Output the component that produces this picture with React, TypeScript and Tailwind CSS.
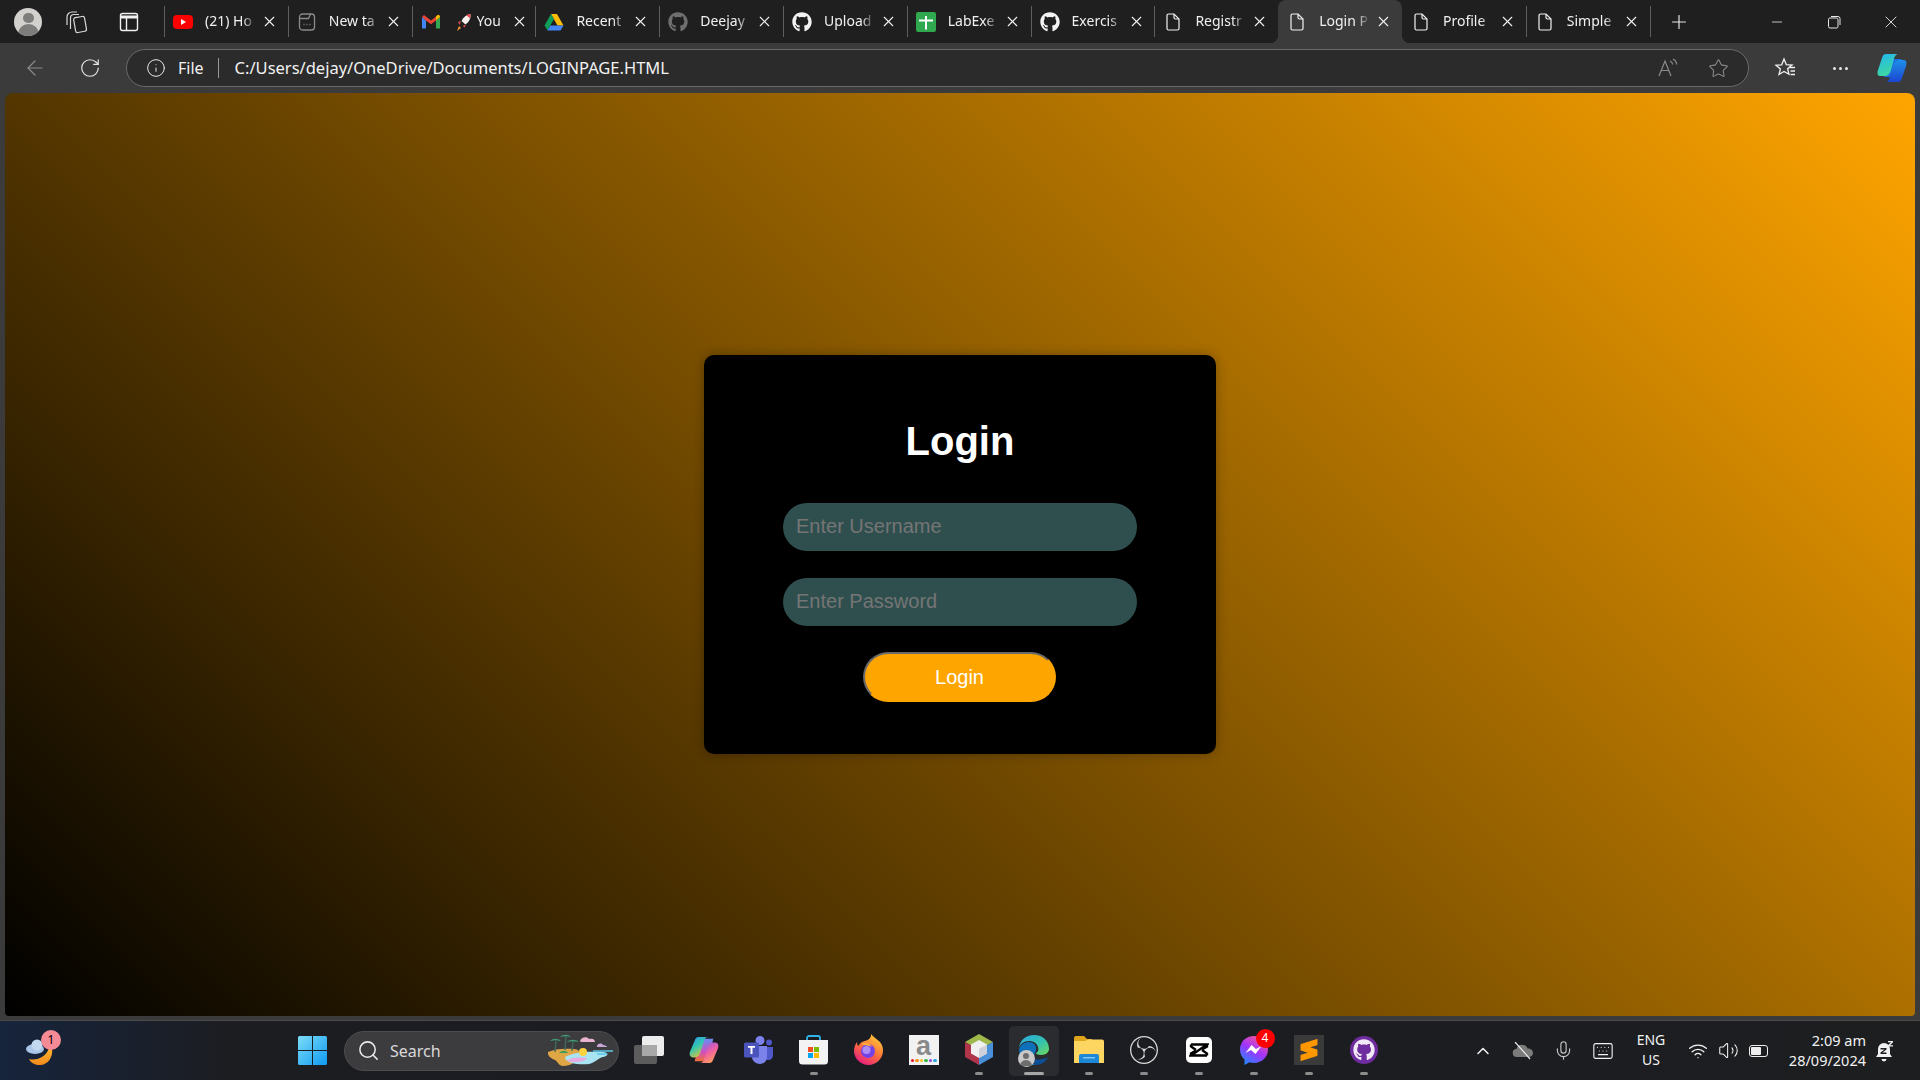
import type { ReactNode } from 'react'
import { ChevronUp, Keyboard, Mic, Minus, Plus, RotateCw, Search, Star, Volume2, Wifi, X, ArrowLeft, Info } from 'lucide-react'
import { FaGithub } from 'react-icons/fa'
import { SiObsstudio, SiSublimetext } from 'react-icons/si'

const ui = { fontFamily: '"Noto Sans", "Liberation Sans", sans-serif' }

function DocIcon() {
  return (
    <svg width="20" height="20" viewBox="0 0 20 20" fill="none" stroke="#f2f2f2" strokeWidth="1.2">
      <path d="M4 3.500a1.500 1.500 0 0 1 1.500-1.500H11l5 5v9.500a1.500 1.500 0 0 1-1.500 1.500h-9A1.500 1.500 0 0 1 4 16.500z" />
      <path d="M11 2v3.500A1.500 1.500 0 0 0 12.500 7H16" />
    </svg>
  )
}

function YoutubeIcon() {
  return (
    <svg width="20" height="20" viewBox="0 0 20 20">
      <rect y="3" width="20" height="14" rx="4" fill="#f00" />
      <path d="M8 7l5 3-5 3z" fill="#fff" />
    </svg>
  )
}

function NewTabIcon() {
  return (
    <svg width="20" height="20" viewBox="0 0 20 20" fill="none" stroke="#8a8a8a" strokeWidth="1.3">
      <rect x="2.500" y="2" width="15" height="16" rx="3" />
      <path d="M2.500 6.500h9l2-4.500" />
      <path d="M6.500 12.500h1M9.500 12.500h1M12.500 12.500h1" />
    </svg>
  )
}

function GmailIcon() {
  return (
    <svg width="20" height="20" viewBox="0 0 20 20">
      <path d="M1 5v11.500h4V8.500z" fill="#4285f4" />
      <path d="M15 8.500v8h4V5z" fill="#34a853" />
      <path d="M1 5l4 3.500 5 3.800 5-3.800L19 5l-2-2-7 5.500L3 3z" fill="#ea4335" />
      <path d="M15 8.500L19 5c0-1.500-1-2.300-2-2.300l-2 1.500z" fill="#fbbc04" />
    </svg>
  )
}

function RocketIcon() {
  return (
    <svg width="16" height="20" viewBox="0 0 16 20">
      <path d="M14.500 2c.5 4-1 7.500-5 10.500l-4-3.500C7.500 5 10.500 2.500 14.500 2z" fill="#f4f1ee" />
      <path d="M14.500 2c.2 1.500.1 3-.4 4.400L10.500 3.200C11.700 2.500 13 2.100 14.500 2z" fill="#e5484d" />
      <path d="M5 9l-3 1 1.500 3zM9.500 12.500l-.5 3-2.500-1.500z" fill="#e5484d" />
      <path d="M3 14l2 2-4 3z" fill="#f79633" />
    </svg>
  )
}

function DriveIcon() {
  return (
    <svg width="20" height="20" viewBox="0 0 20 20">
      <path d="M7 2h6l6.500 11.500h-6z" fill="#fbbc04" />
      <path d="M7 2L.500 13.500l3 5L10 7z" fill="#0f9d58" />
      <path d="M6.500 13.500h13l-3 5h-13z" fill="#4285f4" />
    </svg>
  )
}

function SheetIcon() {
  return (
    <svg width="20" height="20" viewBox="0 0 20 20">
      <rect width="20" height="20" rx="2" fill="#2fa84f" />
      <path d="M3 7.500h6V4h2v3.500h6v2h-6v8H9v-8H3z" fill="#fff" />
    </svg>
  )
}

const tabs: { icon: ReactNode; title: string; extra?: ReactNode; active?: boolean; noSep?: boolean; corner?: string }[] = [
  { icon: <YoutubeIcon />, title: '(21) Ho' },
  { icon: <NewTabIcon />, title: 'New ta' },
  { icon: <GmailIcon />, title: 'You', extra: <RocketIcon /> },
  { icon: <DriveIcon />, title: 'Recent' },
  { icon: <FaGithub size={20} color="#6f6f6f" />, title: 'Deejay' },
  { icon: <FaGithub size={20} color="#f2f2f2" />, title: 'Upload' },
  { icon: <SheetIcon />, title: 'LabExe' },
  { icon: <FaGithub size={20} color="#f2f2f2" />, title: 'Exercis' },
  { icon: <DocIcon />, title: 'Registr', corner: 'rounded-br-[8px]' },
  { icon: <DocIcon />, title: 'Login P', active: true, noSep: true },
  { icon: <DocIcon />, title: 'Profile', noSep: true, corner: 'rounded-bl-[8px]' },
  { icon: <DocIcon />, title: 'Simple' },
]

function Tab({ icon, title, extra, active, noSep, corner }: (typeof tabs)[number]) {
  return (
    <div className={`h-full w-[123.8px] shrink-0 bg-[#1f1f1f] ${corner ?? ''}`}>
      <div className={`flex h-full items-center ${active ? 'rounded-t-[8px] bg-[#3b3b3b]' : `bg-[#1f1f1f] ${corner ?? ''}`}`}>
        <span className={`h-[31px] w-px shrink-0 ${noSep ? 'bg-transparent' : 'bg-[#5f5f5f]'}`} />
        <span className="ml-[8px] flex w-[20px] shrink-0 items-center justify-center">{icon}</span>
        {extra ? <span className="ml-[15px] mr-[5px] flex w-[16px] shrink-0">{extra}</span> : null}
        <span className={`mb-[2px] overflow-hidden whitespace-nowrap text-[14px] text-[#f0f0f0] [mask-image:linear-gradient(to_right,#000_72%,transparent_98%)] ${extra ? 'w-[30px]' : 'ml-[12px] w-[52px]'}`}>
          {title}
        </span>
        <X className="ml-[4px] shrink-0 text-[#f2f2f2]" size={17} strokeWidth={1.5} />
      </div>
    </div>
  )
}

function CopilotMark({ id, size = 32 }: { id: string; size?: number }) {
  return (
    <svg width={size} height={size} viewBox="0 0 32 32">
      <defs>
        <linearGradient id={`${id}a`} x1="0" y1="0" x2="0.4" y2="1">
          <stop offset="0" stopColor="#22b8f0" />
          <stop offset="1" stopColor="#3fd8a0" />
        </linearGradient>
        <linearGradient id={`${id}b`} x1="0" y1="0" x2="0" y2="1">
          <stop offset="0" stopColor="#1f8fe8" />
          <stop offset="1" stopColor="#1a46d0" />
        </linearGradient>
      </defs>
      <path d="M14 7h12l-6 18H8z" fill="#1c6fe0" />
      <path d="M10 2h13c-3 0-4 1.500-5 5l-3 11c-1 3-3 6-6 6H4C1.500 24 1 21 2 18L6 6c.7-2.500 2-4 4-4z" fill={`url(#${id}a)`} />
      <path d="M22 30H9c3 0 4-1.500 5-5l3-11c1-3 3-6 6-6h5c2.500 0 3 3 2 6l-4 12c-.7 2.500-2 4-4 4z" fill={`url(#${id}b)`} />
    </svg>
  )
}

function WidgetIcon() {
  return (
    <div className="relative h-[34px] w-[30px]">
      <svg width="30" height="34" viewBox="0 0 30 34">
        <defs>
          <linearGradient id="moon" x1="0" y1="0" x2="0" y2="1">
            <stop offset="0" stopColor="#ffb52e" />
            <stop offset="1" stopColor="#f08a1d" />
          </linearGradient>
        </defs>
        <path d="M27 14c1.500 9-4 17-12 17-5 0-9-2-11-6 8 2 17-2 20-11z" fill="url(#moon)" />
        <ellipse cx="10" cy="15" rx="9" ry="5" fill="#a9c6e8" />
        <circle cx="12" cy="11" r="5.500" fill="#c3d9f0" />
      </svg>
      <span className="absolute left-[16px] top-[-4px] flex h-[20px] w-[20px] items-center justify-center rounded-full bg-[#f48a95] text-[12px] text-black">1</span>
    </div>
  )
}

function WindowsLogo() {
  return (
    <svg width="29" height="29" viewBox="0 0 29 29">
      <defs>
        <linearGradient id="win" x1="0" y1="0" x2="1" y2="1">
          <stop offset="0" stopColor="#7cdcf8" />
          <stop offset="1" stopColor="#0f9af0" />
        </linearGradient>
      </defs>
      <path d="M0 1.500A1.500 1.500 0 0 1 1.500 0H14v14H0zM15 0h12.500A1.500 1.500 0 0 1 29 1.500V14H15zM0 15h14v14H1.500A1.500 1.500 0 0 1 0 27.500zM15 15h14v12.500a1.500 1.500 0 0 1-1.500 1.500H15z" fill="url(#win)" />
    </svg>
  )
}

function BeachArt() {
  return (
    <svg width="66" height="36" viewBox="0 0 66 36">
      <path d="M1 19c6-3 16-4 26-3 5 .5 7 3 5 7-3 6-8 10-16 10-4 0-5-4-8-6-3-1-8-4-7-8z" fill="#e0a544" />
      <path d="M18 24c8-5 22-6 38-5 6 .5 6 4 0 5-5 1-7 5-14 7-8 1-24 0-24-7z" fill="#a9e4f2" />
      <path d="M20 27c6-3 14-3 20-2-2 3-7 4-12 4-3 0-7 0-8-2z" fill="#e8a8e0" />
      <circle cx="36" cy="19" r="4" fill="#ffd23f" />
      <path d="M8 19l1-11M18 17l1-14M25 18l1-10" stroke="#3e6a57" strokeWidth="1.400" />
      <path d="M3 8c3-3 8-3 11 0-4-1-7-1-11 0zM13 4c3-3 8-3 11 0-4-1-7-1-11 0zM20 9c3-3 9-3 12 0-4-1-8-1-12 0z" fill="#3f9a75" />
      <path d="M12 20c3-3 7-3 9 0z" fill="#37a05a" />
      <path d="M33 8c1-4 7-5 9-2 3-1 6 0 6 3H34z" fill="#e8b4cf" />
      <path d="M50 13c1-3 5-3 6-1 2 0 4 1 4 2H50z" fill="#c7a5d8" />
      <path d="M46 18h20M50 21h10" stroke="#59c6e8" strokeWidth="1.500" />
    </svg>
  )
}

function TaskView() {
  return (
    <svg width="30" height="28" viewBox="0 0 30 28">
      <rect x="0" y="9" width="23" height="19" rx="2" fill="#5c5c5c" />
      <rect x="8" y="0" width="22" height="20" rx="2" fill="#ececec" />
      <rect x="8" y="9" width="15" height="11" fill="#a8a8a8" />
    </svg>
  )
}

function CopilotApp() {
  return (
    <svg width="30" height="28" viewBox="0 0 32 30">
      <defs>
        <linearGradient id="cpa" x1="0" y1="0" x2="0.6" y2="1">
          <stop offset="0" stopColor="#2c8ff0" />
          <stop offset="0.5" stopColor="#34c8b0" />
          <stop offset="1" stopColor="#f0c030" />
        </linearGradient>
        <linearGradient id="cpb" x1="0.2" y1="0" x2="0.8" y2="1">
          <stop offset="0" stopColor="#8a5cf0" />
          <stop offset="0.5" stopColor="#f060a0" />
          <stop offset="1" stopColor="#ffa850" />
        </linearGradient>
        <linearGradient id="cpc" x1="0" y1="0" x2="0" y2="1">
          <stop offset="0" stopColor="#6a8cf0" />
          <stop offset="0.6" stopColor="#d050c0" />
          <stop offset="1" stopColor="#f07030" />
        </linearGradient>
      </defs>
      <path d="M12 3h14l-6 24H6z" fill="url(#cpc)" />
      <path d="M10 1h11c-3 0-4 1-5 4l-4 13c-1 3-3 5-6 5H4c-3 0-4-3-3-6L6 5c.7-2.500 2-4 4-4z" fill="url(#cpa)" />
      <path d="M22 29H11c3 0 4-1 5-4l4-13c1-3 3-5 6-5h2c3 0 4 3 3 6l-5 12c-.7 2.500-2 4-4 4z" fill="url(#cpb)" />
    </svg>
  )
}

function TeamsIcon() {
  return (
    <svg width="30" height="28" viewBox="0 0 30 28">
      <circle cx="25" cy="6.500" r="3" fill="#5059c9" />
      <circle cx="16" cy="4.500" r="4.500" fill="#7b83eb" />
      <path d="M19 11h10v8c0 3-2 5-5 5-2 0-3-.5-5-2z" fill="#5059c9" />
      <path d="M8 10h15v11c0 4-3 7-7 7-4 0-8-3-8-7z" fill="#7b83eb" />
      <rect y="6.500" width="15" height="15" rx="1.500" fill="#4b53bc" />
      <path d="M4 10h7v1.800H8.500V18h-2v-6.200H4z" fill="#fff" />
    </svg>
  )
}

function StoreIcon() {
  return (
    <svg width="29" height="30" viewBox="0 0 29 30">
      <path d="M8 6V3a2 2 0 0 1 2-2h9a2 2 0 0 1 2 2v3" fill="none" stroke="#2db4e8" strokeWidth="1.800" />
      <path d="M0 5h29v21a3.500 3.500 0 0 1-3.500 3.500h-22A3.500 3.500 0 0 1 0 26z" fill="#f3f3f3" />
      <rect x="9" y="12" width="5" height="5" fill="#f25022" />
      <rect x="15" y="12" width="5" height="5" fill="#7fba00" />
      <rect x="9" y="18" width="5" height="5" fill="#00a4ef" />
      <rect x="15" y="18" width="5" height="5" fill="#ffb900" />
    </svg>
  )
}

function FirefoxIcon() {
  return (
    <svg width="29" height="31" viewBox="0 0 29 31">
      <defs>
        <linearGradient id="ff" x1="0.8" y1="0" x2="0.2" y2="1">
          <stop offset="0" stopColor="#ffd23a" />
          <stop offset="0.5" stopColor="#ff7139" />
          <stop offset="1" stopColor="#e31587" />
        </linearGradient>
      </defs>
      <path d="M17 0c2 3 6 5 9 8 2 2.500 3 5 3 8.500C29 24.500 22.500 31 14.500 31S0 24.500 0 17c0-4 1.500-7 3-9 0 2 .5 3 1.500 4 1-3 4-5 8-5.500 3-1 5-3.500 4.500-6.500z" fill="url(#ff)" />
      <circle cx="14" cy="17" r="7" fill="#7542e5" />
      <circle cx="12.500" cy="16" r="4" fill="#b08cf5" />
      <path d="M7 10c4-2 9-1 11 3-3-1.500-7-1.500-11-3z" fill="#ffb03a" />
    </svg>
  )
}

function AmazonIcon() {
  return (
    <div className="flex h-[30px] w-[30px] flex-col items-center bg-[#f2f2f2]">
      <span className="text-[27px] font-bold leading-[22px] text-[#8a8a8a]" style={{ fontFamily: '"Liberation Sans", sans-serif' }}>a</span>
      <span className="mt-[2px] flex gap-[1px]">
        {['bg-[#e81123]', 'bg-[#f7941d]', 'bg-[#f7c21d]', 'bg-[#39b54a]', 'bg-[#8e44dd]', 'bg-[#29abe2]'].map((c) => (
          <span key={c} className={`h-[3.500px] w-[3.500px] rounded-full ${c}`} />
        ))}
      </span>
    </div>
  )
}

function HexIcon() {
  return (
    <svg width="28" height="31" viewBox="0 0 28 31">
      <path d="M14 0l14 8-14 8L0 8z" fill="#9fb84a" />
      <path d="M0 8l14 8v15L0 23z" fill="#b0344a" />
      <path d="M28 8L14 16v15l14-8z" fill="#4a90d9" />
      <path d="M14 6l8 4.500v9L14 24l-8-4.500v-9z" fill="#f0f0f0" />
      <path d="M14 15l8-4.500v9L14 24z" fill="#cfd2d8" />
    </svg>
  )
}

function EdgeIcon() {
  return (
    <div className="relative h-[32px] w-[32px]">
      <svg width="32" height="32" viewBox="0 0 32 32">
        <defs>
          <linearGradient id="edge" x1="0" y1="0" x2="1" y2="1">
            <stop offset="0" stopColor="#2ba8e0" />
            <stop offset="0.55" stopColor="#35c1b0" />
            <stop offset="1" stopColor="#6fdc5a" />
          </linearGradient>
        </defs>
        <path d="M16 1c9 0 15 6 15 14 0 3-3 6-8 6-3 0-5-1-5-2 2-1 3-3 2-6-1-4-5-6-9-6-5 0-9 3-10 7C2 6 8 1 16 1z" fill="url(#edge)" />
        <path d="M1 15c2-5 6-7 10-7 5 0 8 4 7 8-1 4-4 8-4 11 0 2 2 3 4 4-9 1-17-6-17-16z" fill="#0d70b8" />
        <path d="M18 31c5 0 10-3 12-8-3 2-9 3-13 2-1 2-1 5 1 6z" fill="#0c4f95" />
      </svg>
      <span className="absolute bottom-[-1px] left-0 flex h-[17px] w-[17px] flex-col items-center overflow-hidden rounded-full bg-[#c9c9c9]">
        <span className="mt-[3px] h-[6px] w-[6px] rounded-full bg-[#6d6d6d]" />
        <span className="mt-[1px] h-[6px] w-[12px] rounded-t-full bg-[#6d6d6d]" />
      </span>
    </div>
  )
}

function FolderIcon() {
  return (
    <svg width="30" height="28" viewBox="0 0 30 28">
      <path d="M0 2a2 2 0 0 1 2-2h8l3 3h5v6H0z" fill="#e0a31c" />
      <path d="M0 5h11l3-1.500h14a2 2 0 0 1 2 2V27H0z" fill="#fcd661" />
      <path d="M5 27v-7a2 2 0 0 1 2-2h16a2 2 0 0 1 2 2v7z" fill="#1e88d8" />
      <rect x="9" y="21" width="12" height="1.500" fill="#7fc4f2" />
    </svg>
  )
}

function CapcutIcon() {
  return (
    <div className="flex h-[26px] w-[26px] items-center justify-center rounded-[5px] bg-white">
      <svg width="20" height="16" viewBox="0 0 20 16" fill="none" stroke="#000" strokeWidth="2.400">
        <path d="M2 2.500h16L2 13.500h16" />
        <path d="M2 2.500v2l5 3.500M18 13.500v-2l-5-3.500M18 2.500v2l-5 3M2 13.500v-2l5-3" />
      </svg>
    </div>
  )
}

function MessengerIcon() {
  return (
    <div className="relative h-[30px] w-[30px]">
      <svg width="30" height="30" viewBox="0 0 30 30">
        <defs>
          <linearGradient id="ms" x1="0.2" y1="1" x2="0.8" y2="0">
            <stop offset="0" stopColor="#1f8cff" />
            <stop offset="0.5" stopColor="#a033ff" />
            <stop offset="1" stopColor="#ff5c87" />
          </linearGradient>
        </defs>
        <path d="M15 1C7 1 1 6.800 1 14.500c0 4 1.700 7.500 4.500 10V30l5-2.700c1.400.4 3 .6 4.500.6 8 0 14-5.800 14-13.400C29 6.800 23 1 15 1z" fill="url(#ms)" />
        <path d="M6.500 18l6-8 4.500 4 5.500-3-6 8-4.500-4z" fill="#fff" />
      </svg>
      <span className="absolute right-[-6px] top-[-6px] flex h-[19px] w-[19px] items-center justify-center rounded-full bg-[#f00] text-[12px] text-white">4</span>
    </div>
  )
}

function GithubApp() {
  return (
    <div className="flex h-[28px] w-[28px] items-center justify-center rounded-full bg-[#6e2c9e]">
      <FaGithub size={22} color="#f1e9f7" />
    </div>
  )
}

const apps: { icon: ReactNode; dot?: boolean; active?: boolean }[] = [
  { icon: <TaskView /> },
  { icon: <CopilotApp /> },
  { icon: <TeamsIcon /> },
  { icon: <StoreIcon />, dot: true },
  { icon: <FirefoxIcon /> },
  { icon: <AmazonIcon /> },
  { icon: <HexIcon />, dot: true },
  { icon: <EdgeIcon />, active: true },
  { icon: <FolderIcon />, dot: true },
  { icon: <SiObsstudio size={28} color="#d8d8d8" />, dot: true },
  { icon: <CapcutIcon />, dot: true },
  { icon: <MessengerIcon />, dot: true },
  { icon: <div className="flex h-[30px] w-[30px] items-center justify-center bg-[#3a3a3a]"><SiSublimetext size={22} color="#ff9800" /></div>, dot: true },
  { icon: <GithubApp />, dot: true },
]

function AppSlot({ icon, dot, active }: (typeof apps)[number]) {
  return (
    <div className="flex h-full w-[55px] shrink-0 flex-col items-center justify-center">
      <div className={`relative flex h-[50px] w-[50px] items-center justify-center rounded-[5px] ${active ? 'bg-[#2b2c30]' : ''}`}>
        <div className="mb-[2px]">{icon}</div>
        {dot ? <span className="absolute bottom-[1px] h-[3px] w-[8px] rounded-full bg-[#8c8c8c]" /> : null}
        {active ? <span className="absolute bottom-[1px] h-[3px] w-[20px] rounded-full bg-[#a6a6a6]" /> : null}
      </div>
    </div>
  )
}

function CloudOff() {
  return (
    <svg width="22" height="18" viewBox="0 0 22 18">
      <path d="M5 15a4 4 0 0 1-.5-8C5 4 8 2 11 3c2 0 4 1.500 4.500 3.500 3.500 0 5.500 2 5.500 4.500s-2 4-4.500 4z" fill="#7b7b7b" />
      <path d="M3 0l15 17" stroke="#ededed" strokeWidth="1.200" />
    </svg>
  )
}

export default function App() {
  return (
    <div className="flex h-[1080px] w-[1920px] flex-col overflow-hidden bg-[#3b3b3b]" style={ui}>
      {/* tab strip */}
      <div className="flex h-[43px] shrink-0 bg-[#3b3b3b]">
        <div className="flex w-[164px] shrink-0 items-center bg-[#1f1f1f]">
          <div className="ml-[14px] flex h-[28px] w-[28px] flex-col items-center overflow-hidden rounded-full bg-[#d2d1cd]">
            <span className="mt-[5px] h-[11px] w-[11px] rounded-full bg-[#7d7d7b]" />
            <span className="mt-[1px] h-[12px] w-[21px] rounded-t-full bg-[#7d7d7b]" />
          </div>
          <svg className="ml-[22px]" width="24" height="24" viewBox="0 0 24 24" fill="none" stroke="#d8d8d8" strokeWidth="1.200">
            <path d="M3 15V7a5 5 0 0 1 5-5h5" />
            <path d="M6.500 19V8a3.500 3.500 0 0 1 3.500-3.500h5" />
            <rect x="10.500" y="7" width="11" height="15" rx="2" transform="rotate(-10 16 14)" />
          </svg>
          <svg className="ml-[30px]" width="22" height="22" viewBox="0 0 22 22" fill="none" stroke="#f0f0f0" strokeWidth="1.400">
            <rect x="2.500" y="2.500" width="17" height="17" rx="2" />
            <path d="M3 6h16" strokeWidth="3" />
            <path d="M8.500 6v13.500" />
          </svg>
        </div>
        {tabs.map((t) => (
          <Tab key={t.title} {...t} />
        ))}
        <div className="flex flex-1 items-center bg-[#1f1f1f]">
          <span className="h-[31px] w-px bg-[#5f5f5f]" />
          <Plus className="ml-[17px] text-[#e8e8e8]" size={22} strokeWidth={1.300} />
          <Minus className="ml-[79px] text-[#e8e8e8]" size={16} strokeWidth={1.200} />
          <svg className="ml-[42px]" width="14" height="14" viewBox="0 0 14 14" fill="none" stroke="#e8e8e8">
            <rect x="1.500" y="3" width="9.500" height="10" rx="1.500" />
            <path d="M4 1.500h7a2 2 0 0 1 2 2V10" />
          </svg>
          <X className="ml-[40px] text-[#e8e8e8]" size={20} strokeWidth={1.100} />
        </div>
      </div>

      {/* toolbar */}
      <div className="flex h-[50px] shrink-0 items-center">
        <div className="flex w-[70px] justify-center">
          <ArrowLeft className="text-[#8a8a8a]" size={24} strokeWidth={1.200} />
        </div>
        <div className="flex w-[40px] justify-center">
          <RotateCw className="text-[#e6e6e6]" size={22} strokeWidth={1.300} />
        </div>
        <div className="ml-[16px] flex h-[38px] w-[1623px] items-center rounded-full border border-[#6a6a6a] bg-[#2b2b2b] text-[#f2f2f2]">
          <Info className="ml-[19px] text-[#e8e8e8]" size={20} strokeWidth={1.200} />
          <span className="ml-[12px] text-[16px]">File</span>
          <span className="ml-[14px] h-[20px] w-px bg-[#9a9a9a]" />
          <span className="ml-[16px] text-[16.5px]">C:/Users/dejay/OneDrive/Documents/LOGINPAGE.HTML</span>
          <svg className="ml-auto" width="22" height="20" viewBox="0 0 22 20" fill="none" stroke="#8a8a8a" strokeWidth="1.200">
            <path d="M2 18L8 3l6 15M4.500 12.500h7" />
            <path d="M13 3c1.500.7 2.500 2 2.800 3.500M16 1c2 1 3.400 3 3.800 5.500" />
          </svg>
          <Star className="ml-[29px] mr-[19px] text-[#8a8a8a]" size={21} strokeWidth={1.200} />
        </div>
        <div className="ml-[16px] flex w-[40px] justify-center">
          <svg width="22" height="22" viewBox="0 0 22 22" fill="none" stroke="#f0f0f0" strokeWidth="1.300">
            <path d="M10 2l2.300 5.600 5.700.4-4.400 3.700 1.400 5.600L10 14.500 5 17.500l1.400-5.600L2 8.200l5.700-.4z" />
            <path d="M15 10.500h6M16.500 14h4.500M16.500 17.500h4.500" />
          </svg>
        </div>
        <div className="ml-[15px] flex w-[40px] justify-center gap-[3px]">
          <span className="h-[3px] w-[3px] rounded-full bg-[#e8e8e8]" />
          <span className="h-[3px] w-[3px] rounded-full bg-[#e8e8e8]" />
          <span className="h-[3px] w-[3px] rounded-full bg-[#e8e8e8]" />
        </div>
        <div className="ml-[12px] flex w-[40px] justify-center">
          <CopilotMark id="edgecp" />
        </div>
      </div>

      {/* page */}
      <div className="mx-[5px] flex h-[923px] shrink-0 items-center justify-center rounded-t-[8px] rounded-b-[4px] bg-[linear-gradient(45deg,#000,#ffa500)]" style={{ fontFamily: '"Liberation Sans", Arial, sans-serif' }}>
        <form className="flex h-[399px] w-[512px] flex-col items-center rounded-[10px] bg-black shadow-[0_0_12px_rgba(0,0,0,0.3)]">
          <h1 className="mt-[63px] text-[40px] font-bold leading-[46px] text-white">Login</h1>
          <input
            className="mt-[39px] h-[48px] w-[354px] rounded-[24px] bg-[#2f4f4f] px-[13px] pb-[2px] text-[20px] text-white outline-none placeholder:text-[#757575]"
            placeholder="Enter Username"
          />
          <input
            className="mt-[27px] h-[48px] w-[354px] rounded-[24px] bg-[#2f4f4f] px-[13px] pb-[2px] text-[20px] text-white outline-none placeholder:text-[#757575]"
            placeholder="Enter Password"
            type="password"
          />
          <button
            type="button"
            className="mr-[1px] mt-[26px] h-[50px] w-[193px] rounded-[25px] border-2 border-t-[#6a6a6a] border-r-[#ffa500] border-b-[#ffa500] border-l-[#6a6a6a] bg-[#ffa500] text-[20px] text-white"
          >
            Login
          </button>
        </form>
      </div>

      {/* taskbar */}
      <div className="mt-[4px] flex h-[60px] shrink-0 items-center border-t border-[#4a4a4a] bg-[linear-gradient(to_right,#16243c,#1c1d21_12%,#1b1c22_40%,#1d1e20)] text-[#f2f2f2]">
        <div className="w-[298px] shrink-0 pl-[25px]">
          <WidgetIcon />
        </div>
        <WindowsLogo />
        <div className="ml-[17px] flex h-[40px] w-[275px] shrink-0 items-center rounded-full border border-[#4d4d50] bg-[#3c3c3f]">
          <Search className="ml-[12px] text-[#e8e8e8]" size={23} strokeWidth={1.600} />
          <span className="ml-[10px] text-[16px] text-[#d8d8d8]">Search</span>
          <span className="ml-auto mr-[5px] flex"><BeachArt /></span>
        </div>
        <div className="ml-[2px] flex h-full">
          {apps.map((a, i) => (
            <AppSlot key={i} {...a} />
          ))}
        </div>
        <div className="ml-auto flex h-full items-center pr-[16px]">
          <div className="flex w-[40px] justify-center"><ChevronUp size={20} strokeWidth={1.800} /></div>
          <div className="flex w-[40px] justify-center"><CloudOff /></div>
          <div className="flex w-[40px] justify-center"><Mic className="text-[#c8c8c8]" size={21} strokeWidth={1.300} /></div>
          <div className="flex w-[40px] justify-center"><Keyboard size={22} strokeWidth={1.200} /></div>
          <div className="mb-[2px] flex w-[56px] flex-col items-center text-[14px] leading-[20px]">
            <span>ENG</span>
            <span>US</span>
          </div>
          <div className="ml-[4px] flex w-[30px] justify-center"><Wifi size={20} strokeWidth={1.600} /></div>
          <div className="flex w-[30px] justify-center"><Volume2 size={21} strokeWidth={1.200} /></div>
          <div className="flex w-[30px] justify-center">
            <span className="flex h-[12px] w-[19px] items-center rounded-[3px] border border-[#eee] p-[1px]">
              <span className="h-full w-[10px] rounded-[1px] bg-[#eee]" />
            </span>
          </div>
          <div className="mb-[2px] flex w-[93px] flex-col items-end text-[14.5px] leading-[20px]">
            <span>2:09 am</span>
            <span>28/09/2024</span>
          </div>
          <div className="flex w-[38px] justify-center">
            <svg width="20" height="22" viewBox="0 0 20 22" fill="#f0f0f0">
              <path d="M9 3a6 6 0 0 1 6 6v5l2 3H1l2-3V9a6 6 0 0 1 6-6zM6.500 19h5a2.500 2.500 0 0 1-5 0z" />
              <path d="M5.500 8h6v1.500l-4 3h4V14h-6v-1.500l4-3h-4z" fill="#1c1d21" />
              <path d="M13 1h5v1.200l-3 3h3V6.500h-5V5.300l3-3h-3z" />
            </svg>
          </div>
        </div>
      </div>
    </div>
  )
}
